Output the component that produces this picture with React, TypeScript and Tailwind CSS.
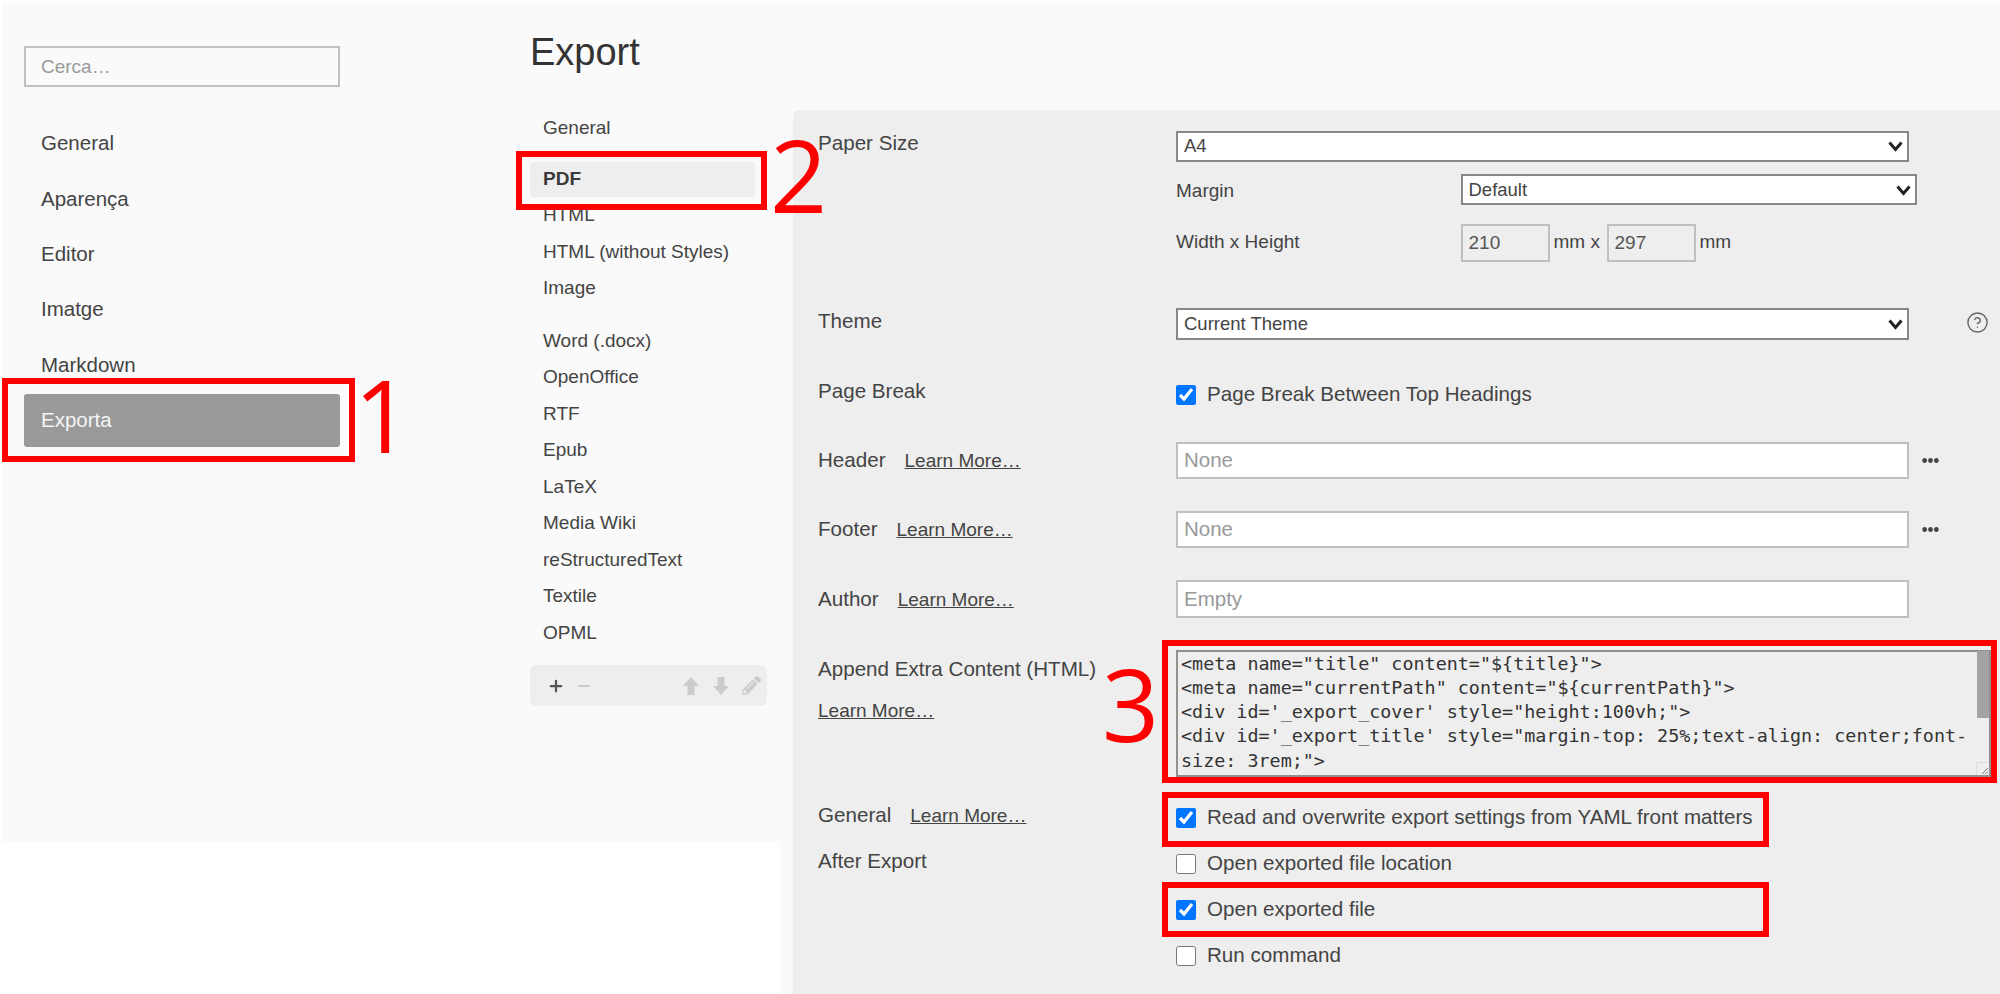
import React from "react";
import { CircleHelp, Minus, Plus } from "lucide-react";
import { FaEllipsisH, FaPencilAlt } from "react-icons/fa";

const extraContent = `<meta name="title" content="\${title}">
<meta name="currentPath" content="\${currentPath}">
<div id='_export_cover' style="height:100vh;">
<div id='_export_title' style="margin-top: 25%;text-align: center;font-size: 3rem;">
\${title}
</div>
</div>
<div style="page-break-after: always;"></div>`;

function LearnMore({ className = "" }: { className?: string }) {
  return <a className={`text-[19px] underline ${className}`}>Learn More…</a>;
}

function SelectBox({ value, className }: { value: string; className: string }) {
  return (
    <div className={`relative ${className}`}>
      <select
        defaultValue={value}
        className="h-full w-full appearance-none rounded-none border-2 border-[#888] bg-white pl-[6px] text-[18.5px] leading-none text-[#444]"
      >
        <option>{value}</option>
      </select>
      <svg
        className="pointer-events-none absolute right-[6px] top-[11px]"
        width="15"
        height="11"
        viewBox="0 0 15 11"
        fill="none"
        stroke="#222"
        strokeWidth="3"
      >
        <path d="M1.5 1.5 7.5 8.5 13.5 1.5" />
      </svg>
    </div>
  );
}

function TextBox({ placeholder }: { placeholder: string }) {
  return (
    <input
      placeholder={placeholder}
      className="h-full w-[733px] border-2 border-[#c0c0c0] bg-white pl-[6px] text-[20.5px] placeholder-[#999]"
    />
  );
}

function Check({ label, checked }: { label: string; checked?: boolean }) {
  return (
    <label className="flex h-[26px] items-center">
      <input
        type="checkbox"
        defaultChecked={checked}
        className="m-0 h-[20px] w-[20px] accent-[#0075ff]"
      />
      <span className="ml-[11px]">{label}</span>
    </label>
  );
}

function Dots() {
  return <FaEllipsisH className="ml-[13px] text-[#444]" size={17} />;
}

function Arrow({ down }: { down?: boolean }) {
  return (
    <svg width="16" height="18" viewBox="0 0 16 18" fill="#ccc" className={down ? "ml-[14px] rotate-180" : "ml-[90px]"}>
      <path d="M8 0 16 9H11.5V18H4.5V9H0Z" />
    </svg>
  );
}

function RedBox({ className }: { className: string }) {
  return <div className={`pointer-events-none absolute border-[6px] border-[#ff0000] ${className}`} />;
}

function Mark({ n, className }: { n: string; className: string }) {
  return (
    <span
      className={`absolute text-[100px] leading-none text-[#ff0000] ${className}`}
      style={{ fontFamily: '"Open Sans", sans-serif' }}
    >
      {n}
    </span>
  );
}

export default function App() {
  return (
    <div className="relative flex h-[994px] w-[2000px] overflow-hidden bg-white pl-[2px] pt-[3px] font-['Liberation_Sans',sans-serif] text-[20.6px] text-[#444] blur-[0.4px]">
      {/* Section sidebar + export list */}
      <div className="flex h-[839px] w-[778px] shrink-0 bg-[#fafafa]">
        <aside className="w-[514px] shrink-0 pl-[22px] pt-[43px]">
          <input
            placeholder="Cerca…"
            className="h-[41px] w-[316px] border-2 border-[#c0c0c0] bg-[#fafafa] pl-[15px] text-[19px] placeholder-[#999]"
          />
          <nav className="mt-[30px] flex w-[316px] flex-col gap-[2.4px] text-[20.5px]">
            {["General", "Aparença", "Editor", "Imatge", "Markdown"].map((item) => (
              <div key={item} className="flex h-[53px] items-center pl-[17px]">
                {item}
              </div>
            ))}
            <div className="flex h-[53px] items-center rounded-[3px] bg-[#999] pb-[1px] pl-[17px] text-[#f5f5f5]">
              Exporta
            </div>
          </nav>
        </aside>
        <div className="pl-[14px] pt-[27px]">
          <h1 className="text-[38px] leading-[44px] text-[#333]">Export</h1>
          <ul className="mt-[36px] w-[225px] text-[19px]">
            <li className="flex h-[36.5px] items-center pl-[13px]">General</li>
            <li className="mt-[15.5px] flex h-[35px] items-center rounded-[3px] bg-[#eee] pl-[13px] font-bold text-[#3a3a3a]">
              PDF
            </li>
            {["HTML", "HTML (without Styles)", "Image"].map((item) => (
              <li key={item} className="flex h-[36.5px] items-center pl-[13px]">
                {item}
              </li>
            ))}
            <li className="h-[16px]" />
            {["Word (.docx)", "OpenOffice", "RTF", "Epub", "LaTeX", "Media Wiki", "reStructuredText", "Textile", "OPML"].map(
              (item) => (
                <li key={item} className="flex h-[36.5px] items-center pl-[13px]">
                  {item}
                </li>
              ),
            )}
          </ul>
          <div className="mt-[14px] flex h-[41px] w-[237px] items-center rounded-[6px] bg-[#eee] pl-[17px]">
            <Plus size={18} strokeWidth={3} className="text-[#555]" />
            <Minus size={18} strokeWidth={2.5} className="ml-[10px] text-[#ccc]" />
            <Arrow />
            <Arrow down />
            <FaPencilAlt size={19} className="ml-[13px] text-[#ccc]" />
          </div>
        </div>
      </div>

      {/* Section settings panel */}
      <div className="flex-1 bg-[#fafafa] pl-[13px] pt-[107px]">
        <section className="h-full rounded-tl-[6px] bg-[#eee] pl-[25px] pt-[20px]">
          <div className="flex">
            <div className="w-[358px] leading-[26px]">Paper Size</div>
            <SelectBox value="A4" className="h-[31px] w-[733px]" />
          </div>
          <div className="ml-[358px] mt-[13px] flex items-center text-[19px]">
            <div className="w-[284.5px] pt-[3px]">Margin</div>
            <SelectBox value="Default" className="h-[31px] w-[456px]" />
          </div>
          <div className="ml-[358px] mt-[18px] flex h-[38px] items-center text-[19px]">
            <div className="w-[284.5px]">Width x Height</div>
            <input
              disabled
              value="210"
              className="h-full w-[89px] border-2 border-[#c0c0c0] bg-[#eee] pl-[6px] text-[#555]"
            />
            <span className="ml-[4px] w-[53px]">mm x</span>
            <input
              disabled
              value="297"
              className="h-full w-[89px] border-2 border-[#c0c0c0] bg-[#eee] pl-[6px] text-[#555]"
            />
            <span className="ml-[4px]">mm</span>
          </div>

          <div className="mt-[46px] flex items-start">
            <div className="w-[358px] leading-[26px]">Theme</div>
            <SelectBox value="Current Theme" className="h-[32px] w-[733px]" />
            <CircleHelp size={23} strokeWidth={1.5} className="ml-[57px] mt-[3px] text-[#666]" />
          </div>

          <div className="mt-[38px] flex items-start">
            <div className="w-[358px] leading-[26px]">Page Break</div>
            <div className="mt-[4px]">
              <Check label="Page Break Between Top Headings" checked />
            </div>
          </div>

          <div className="mt-[34px] flex h-[37px] items-center">
            <div className="w-[358px]">
              Header
              <LearnMore className="ml-[19px]" />
            </div>
            <TextBox placeholder="None" />
            <Dots />
          </div>
          <div className="mt-[32px] flex h-[37px] items-center">
            <div className="w-[358px]">
              Footer
              <LearnMore className="ml-[19px]" />
            </div>
            <TextBox placeholder="None" />
            <Dots />
          </div>
          <div className="mt-[32px] flex h-[38px] items-center">
            <div className="w-[358px] pt-[2px]">
              Author
              <LearnMore className="ml-[19px]" />
            </div>
            <TextBox placeholder="Empty" />
          </div>

          <div className="mt-[32px] flex items-start">
            <div className="w-[358px] pt-[6px] leading-[26px]">
              <div>Append Extra Content (HTML)</div>
              <LearnMore className="mt-[16px] block" />
            </div>
            <div className="relative h-[127px] w-[815px]">
              <textarea
                readOnly
                value={extraContent}
                className="h-full w-full resize-none border-2 border-[#909090] bg-[#eee] pl-[3px] font-['DejaVu_Sans_Mono',monospace] text-[18.4px] leading-[24.3px] text-[#333]"
              />
              {/* headless hides the real scrollbar, so thumb and grip sit on top */}
              <div className="absolute right-[2px] top-[1px] h-[67px] w-[12px] bg-[#a3a3a3]" />
              <div className="absolute bottom-[2px] right-[2px] h-[13px] w-[13px] border-l border-t border-[#ddd] bg-[#eee]">
                <svg width="12" height="12" viewBox="0 0 12 12" stroke="#777" strokeWidth="1">
                  <path d="M11 5 5 11M11 8.5 8.5 11" />
                </svg>
              </div>
            </div>
          </div>

          <div className="mt-[28px] flex items-start">
            <div className="-mt-[3px] w-[358px] leading-[26px]">
              General
              <LearnMore className="ml-[19px]" />
              <div className="mt-[19px]">After Export</div>
            </div>
            <div className="flex flex-col gap-[20px]">
              <Check label="Read and overwrite export settings from YAML front matters" checked />
              <Check label="Open exported file location" />
              <Check label="Open exported file" checked />
              <Check label="Run command" />
            </div>
          </div>
        </section>
      </div>

      {/* Red annotations drawn over the screenshot */}
      <RedBox className="left-[2px] top-[378px] h-[84px] w-[353px]" />
      <RedBox className="left-[516px] top-[151px] h-[59px] w-[251px]" />
      <RedBox className="left-[1162px] top-[640px] h-[143px] w-[835px]" />
      <RedBox className="left-[1162px] top-[792px] h-[55px] w-[607px]" />
      <RedBox className="left-[1162px] top-[882px] h-[55px] w-[607px]" />
      <Mark n="1" className="left-[354px] top-[364px]" />
      <Mark n="2" className="left-[770px] top-[124px]" />
      <Mark n="3" className="left-[1102px] top-[653px]" />
    </div>
  );
}
